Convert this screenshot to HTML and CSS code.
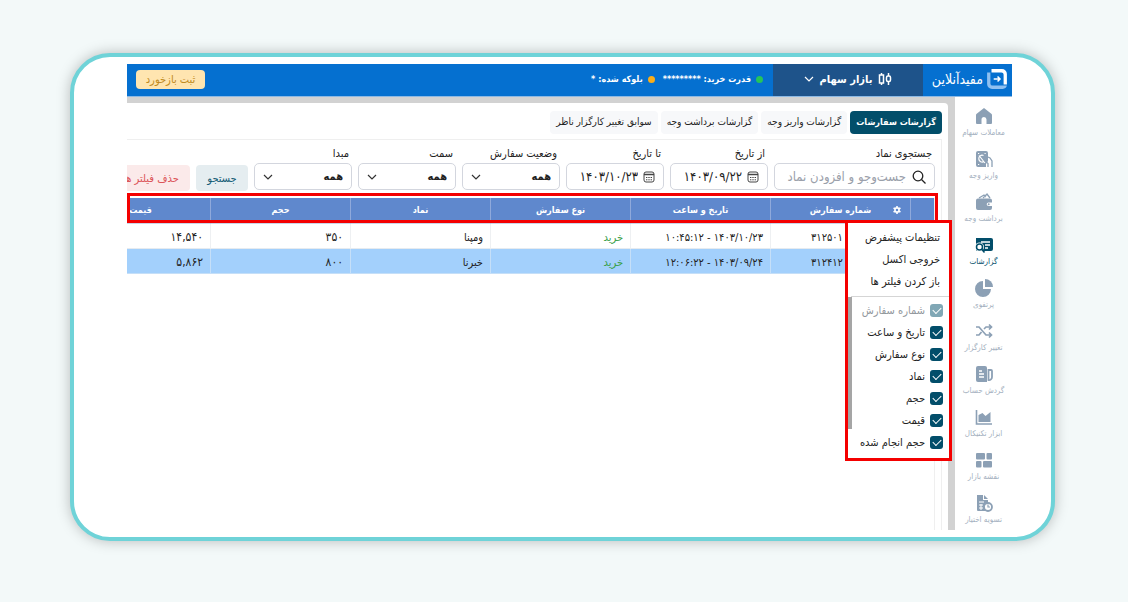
FILE: index.html
```html
<!DOCTYPE html>
<html lang="fa" dir="rtl">
<head>
<meta charset="utf-8">
<meta name="viewport" content="width=device-width, initial-scale=1">
<title>گزارشات سفارشات</title>
<link rel="stylesheet" href="styles.css">
</head>
<body>
<div class="frame">
<div class="app">
  <header class="topbar">
    <a class="brand" href="#">
      <svg class="brand-mark" viewBox="0 0 20 20" width="22" height="22"><path d="M5 1h9.500a4.500 4.500 0 0 1 4.500 4.500V15h-3V6a2 2 0 0 0-2-2H5z" fill="#fff"/><path d="M1.500 4H4v10a2 2 0 0 0 2 2h13a4 4 0 0 1-4 3H5.500a4.500 4.500 0 0 1-4.500-4.500V4z" fill="#8fc0f0"/><path d="M7 10h5.500M10.500 7.800 12.700 10l-2.200 2.200" fill="none" stroke="#fff" stroke-width="1.400"/></svg>
      <span>مفیدآنلاین</span>
    </a>
    <button class="market" type="button">
      <svg viewBox="0 0 14 14" width="14" height="14" fill="none" stroke="#fff" stroke-width="1.500"><rect x="1.500" y="3" width="4" height="8"/><path d="M3.500 1v2M3.500 11v2M10.500 1v3M10.500 10v3"/><rect x="8.500" y="4" width="4" height="5.500" rx="1.500"/></svg>
      <span>بازار سهام</span>
      <svg viewBox="0 0 10 10" width="10" height="10" fill="none" stroke="#fff" stroke-width="1.200"><path d="m1 3 4 4 4-4"/></svg>
    </button>
    <div class="balances">
      <span class="balance"><i class="dot green"></i>قدرت خرید: *********</span>
      <span class="balance"><i class="dot orange"></i>بلوکه شده: *</span>
    </div>
    <button class="feedback" type="button">ثبت بازخورد</button>
  </header>

  <div class="body">
    <nav class="side">
      <a href="#"><svg viewBox="0 0 18 18"><path d="M9 1 2 6.500a2 2 0 0 0-1 2V16a1 1 0 0 0 1 1h4.500v-4.500a2.500 2.500 0 0 1 5 0V17H16a1 1 0 0 0 1-1V8.500a2 2 0 0 0-1-2z" fill="currentColor"/></svg>معاملات سهام</a>
      <a href="#"><svg viewBox="0 0 18 18"><path d="M3 1h8a2 2 0 0 1 2 2v8l-2 3v3H3a2 2 0 0 1-2-2V3a2 2 0 0 1 2-2z" fill="currentColor"/><path d="M4 5.500 10 13M8.500 5.500a3.400 3.400 0 1 0 .5 6M3 3.500h1.200M9.500 3.500h1.200M3 14.500h1.200" stroke="#fff" stroke-width="1.200" fill="none"/><path d="M13 7l2 1 2 3v6M9 10l4 3.500V17" stroke="currentColor" stroke-width="1.300" fill="none"/></svg>واریز وجه</a>
      <a href="#"><svg viewBox="0 0 18 18"><path d="M1 7.500a2 2 0 0 1 2-2h12a2 2 0 0 1 2 2v2h-3.500a1.800 1.800 0 0 0 0 3.600H17V15a2 2 0 0 1-2 2H3a2 2 0 0 1-2-2z" fill="currentColor"/><path d="m4 5 5-3 2 2M8 5l4-4 3 4" fill="none" stroke="currentColor" stroke-width="1.300"/><circle cx="13.700" cy="11.300" r="1" fill="currentColor"/></svg>برداشت وجه</a>
      <a class="active" href="#"><svg viewBox="0 0 18 18"><path d="M1 2h15a2 2 0 0 1 2 2v9a2 2 0 0 1-2 2H1z" fill="currentColor"/><path d="M6 6h9M10 9h5M10 12h3" stroke="#fff" stroke-width="1.300"/><circle cx="4.500" cy="11" r="4.500" fill="#fff"/><circle cx="4.500" cy="11" r="3" fill="#fff" stroke="currentColor" stroke-width="1.500"/><path d="m6.500 13 3 3.500" stroke="currentColor" stroke-width="1.600"/></svg>گزارشات</a>
      <a href="#"><svg viewBox="0 0 18 18" fill="currentColor"><path d="M8 2v8h8a8 8 0 1 1-8-8z"/><path d="M10 0a8 8 0 0 1 8 8h-8z"/></svg>پرتفوی</a>
      <a href="#"><svg viewBox="0 0 18 18" fill="none" stroke="currentColor" stroke-width="1.700"><path d="M1 5h3l7 8h5M1 13h3l2.500-3M9 7l2-2h5M14 2.500 16.500 5 14 7.500M14 10.500l2.500 2.500-2.500 2.500"/></svg>تغییر کارگزار</a>
      <a href="#"><svg viewBox="0 0 18 18"><path d="M3 1h7a2 2 0 0 1 2 2v14H3a2 2 0 0 1-2-2V3a2 2 0 0 1 2-2z" fill="currentColor"/><path d="M4 6h3M4 9h5M4 12h5" stroke="#fff" stroke-width="1.400"/><path d="M13.500 5H16a1 1 0 0 1 1 1v6a3 3 0 0 1-3.500 3z" fill="none" stroke="currentColor" stroke-width="1.800"/></svg>گردش حساب</a>
      <a href="#"><svg viewBox="0 0 18 18"><path d="M1.500 2v14H17" fill="none" stroke="currentColor" stroke-width="1.600"/><path d="M3.500 14V7l4-2 3 3 5-4v10z" fill="currentColor"/></svg>ابزار تکنیکال</a>
      <a href="#"><svg viewBox="0 0 18 18" fill="currentColor"><rect x="1" y="2" width="9" height="6.500" rx="1"/><rect x="11.500" y="2" width="5.500" height="6.500" rx="1"/><rect x="1" y="10" width="5.500" height="6.500" rx="1"/><rect x="8" y="10" width="9" height="6.500" rx="1"/></svg>نقشه بازار</a>
      <a href="#"><svg viewBox="0 0 18 18"><path d="M2 1h6v5h5v11H3a1 1 0 0 1-1-1z" fill="currentColor"/><path d="m9 1 4 4H9z" fill="currentColor"/><path d="M4 8h5M4 11h4M4 14h4M6 10v6" stroke="#fff"/><circle cx="13" cy="13" r="4" fill="#fff" stroke="currentColor" stroke-width="1.800"/><path d="M13 10.500V13h2" stroke="currentColor" stroke-width="1.200" fill="none"/></svg>تسویه اختیار</a>
    </nav>

    <main class="workspace">
      <div class="panel">
        <div class="tabs">
          <button class="tab current" type="button">گزارشات سفارشات</button>
          <button class="tab" type="button">گزارشات واریز وجه</button>
          <button class="tab" type="button">گزارشات برداشت وجه</button>
          <button class="tab" type="button">سوابق تغییر کارگزار ناظر</button>
        </div>
        <section class="report">
          <form class="filters">
            <div class="field search">
              <label for="symbol">جستجوی نماد</label>
              <div class="control"><svg viewBox="0 0 14 14" width="14" height="14" fill="none" stroke="#222" stroke-width="1.300"><circle cx="6" cy="6" r="4.800"/><path d="m9.500 9.500 4 4"/></svg><input id="symbol" type="text" placeholder="جست‌وجو و افزودن نماد"></div>
            </div>
            <div class="field">
              <label for="from">از تاریخ</label>
              <div class="control date"><svg viewBox="0 0 12 12" width="12" height="12" fill="none" stroke="#444"><rect x="1" y="1" width="10" height="10" rx="2"/><path d="M1 3.500h10" stroke-width="1.500"/><path d="M3 6.500h6M3 8.800h6" stroke-dasharray="1.400 .9"/></svg><input id="from" type="text" value="۱۴۰۳/۰۹/۲۲"></div>
            </div>
            <div class="field">
              <label for="to">تا تاریخ</label>
              <div class="control date"><svg viewBox="0 0 12 12" width="12" height="12" fill="none" stroke="#444"><rect x="1" y="1" width="10" height="10" rx="2"/><path d="M1 3.500h10" stroke-width="1.500"/><path d="M3 6.500h6M3 8.800h6" stroke-dasharray="1.400 .9"/></svg><input id="to" type="text" value="۱۴۰۳/۱۰/۲۳"></div>
            </div>
            <div class="field">
              <label for="status">وضعیت سفارش</label>
              <div class="control"><select id="status"><option>همه</option></select><svg viewBox="0 0 10 10" width="10" height="10" fill="none" stroke="#333" stroke-width="1.200"><path d="m1 3 4 4 4-4"/></svg></div>
            </div>
            <div class="field">
              <label for="direction">سمت</label>
              <div class="control"><select id="direction"><option>همه</option></select><svg viewBox="0 0 10 10" width="10" height="10" fill="none" stroke="#333" stroke-width="1.200"><path d="m1 3 4 4 4-4"/></svg></div>
            </div>
            <div class="field">
              <label for="origin">مبدا</label>
              <div class="control"><select id="origin"><option>همه</option></select><svg viewBox="0 0 10 10" width="10" height="10" fill="none" stroke="#333" stroke-width="1.200"><path d="m1 3 4 4 4-4"/></svg></div>
            </div>
            <button class="action find" type="button">جستجو</button>
            <button class="action clear" type="button">حذف فیلتر ها</button>
          </form>

          <div class="grid">
            <table>
              <colgroup><col class="narrow"><col><col><col><col><col><col></colgroup>
              <thead>
                <tr>
                  <th></th>
                  <th><button class="gear" type="button" aria-label="تنظیمات"><svg viewBox="0 0 10 10" width="8" height="8"><circle cx="5" cy="5" r="2.600" fill="none" stroke="#fff" stroke-width="2"/><path d="M5 0v2M5 8v2M.7 2.500l1.700 1M7.600 6.500l1.700 1M.7 7.500l1.700-1M7.600 3.500l1.700-1" stroke="#fff" stroke-width="2"/></svg></button>شماره سفارش</th>
                  <th>تاریخ و ساعت</th><th>نوع سفارش</th><th>نماد</th><th>حجم</th><th>قیمت</th>
                </tr>
              </thead>
              <tbody>
                <tr><td></td><td class="order" dir="ltr">۳۱۲۵۰۱</td><td><bdi dir="ltr">۱۰:۴۵:۱۲ - ۱۴۰۳/۱۰/۲۳</bdi></td><td class="buy">خرید</td><td>ومپنا</td><td class="num">۳۵۰</td><td class="num">۱۴,۵۴۰</td></tr>
                <tr class="selected"><td></td><td class="order" dir="ltr">۳۱۲۴۱۲</td><td><bdi dir="ltr">۱۲:۰۶:۲۲ - ۱۴۰۳/۰۹/۲۴</bdi></td><td class="buy">خرید</td><td>خبرنا</td><td class="num">۸۰۰</td><td class="num">۵,۸۶۲</td></tr>
              </tbody>
            </table>
            <div class="head-outline"></div>
            <div class="menu">
              <div class="commands">
                <button type="button">تنظیمات پیشفرض</button>
                <button type="button">خروجی اکسل</button>
                <button type="button">باز کردن فیلتر ها</button>
              </div>
              <div class="columns">
                <label class="off"><input type="checkbox" checked disabled>شماره سفارش</label>
                <label><input type="checkbox" checked>تاریخ و ساعت</label>
                <label><input type="checkbox" checked>نوع سفارش</label>
                <label><input type="checkbox" checked>نماد</label>
                <label><input type="checkbox" checked>حجم</label>
                <label><input type="checkbox" checked>قیمت</label>
                <label><input type="checkbox" checked>حجم انجام شده</label>
                <span class="thumb"></span>
              </div>
            </div>
          </div>
        </section>
      </div>
    </main>
  </div>
</div>
</div>
</body>
</html>
```
FILE: styles.css
```css
* { box-sizing: border-box; }
body {
  margin: 0;
  min-height: 100vh;
  display: flex;
  padding: 53px 73px 61px 70px;
  background: #f3f9f9;
  font-family: "DejaVu Sans Condensed", "DejaVu Sans", sans-serif;
  font-size: 11px;
  color: #222;
}
button, input, select { font: inherit; color: inherit; border: 0; margin: 0; padding: 0; background: none; }
button { cursor: pointer; white-space: nowrap; }
a { text-decoration: none; }
svg { flex: none; }
.frame {
  flex: 1;
  min-width: 0;
  display: flex;
  padding: 7px 39px 7px 53px;
  border: 4px solid #6fd3d8;
  border-radius: 40px;
  background: #fff;
  box-shadow: 0 0 14px rgba(0, 0, 0, .25);
}
.app { flex: 1; min-width: 0; display: flex; flex-direction: column; overflow: hidden; }

.topbar {
  display: flex;
  height: 33px;
  flex: none;
  align-items: stretch;
  background: #0570d0;
  border-bottom: 1px solid #8db9e4;
  color: #fff;
}
.brand { width: 89px; display: flex; align-items: center; gap: 3px; padding-right: 4px; padding-bottom: 2px; color: #fff; font-size: 14px; white-space: nowrap; }
.market { width: 150px; display: flex; align-items: center; justify-content: center; gap: 6px; padding-bottom: 2px; background: #1e538a; font-size: 11px; font-weight: bold; }
.balances { display: flex; align-items: center; gap: 8px; padding-right: 10px; padding-bottom: 2px; font-size: 9px; font-weight: bold; }
.balance { display: flex; align-items: center; gap: 5px; white-space: nowrap; }
.dot { width: 7px; height: 7px; border-radius: 50%; }
.green { background: #25c45a; }
.orange { background: #fbad18; }
.feedback { margin: 6px auto 0 9px; width: 69px; height: 19px; border-radius: 4px; background: #ffe5b0; color: #c08a20; }

.body { flex: 1; min-height: 0; display: flex; }
.side { width: 57px; flex: none; display: flex; flex-direction: column; gap: 11px; overflow: hidden; padding-top: 10px; }
.side a { flex: none; display: flex; flex-direction: column; align-items: center; gap: 2px; color: #a3afbe; font-size: 8px; line-height: 12px; white-space: nowrap; }
.side svg { width: 18px; height: 18px; color: #8ca0b5; }
.side .active, .side .active svg { color: #024e6a; }

.workspace { flex: 1; min-width: 0; display: flex; padding: 6px 7px 0 0; background: #d2d2d2; }
.panel { flex: 1; min-width: 0; display: flex; flex-direction: column; padding: 8px 6px 0 0; border-radius: 0 4px 0 0; background: #fff; }
.tabs { display: flex; gap: 3px; padding-bottom: 5px; }
.tab { height: 23px; padding: 0 6px 2px; border-radius: 4px; background: #f7f8fa; font-size: 10px; }
.tab.current { background: #024e6a; color: #fff; font-size: 9px; font-weight: bold; }
.report { flex: 1; min-width: 0; display: flex; flex-direction: column; padding: 7px 6px 0 0; border-top: 1px solid #efefef; border-right: 1px solid #efefef; }

.filters { display: flex; align-items: flex-end; gap: 6px; }
.field { width: 98px; flex: none; }
.field.search { width: 161px; }
.field label { display: block; height: 16px; line-height: 14px; padding-right: 3px; white-space: nowrap; }
.control { display: flex; align-items: center; gap: 6px; height: 27px; padding: 0 8px; border: 1px solid #d3d6de; border-radius: 5px; }
.control input { flex: 1; min-width: 0; width: 0; outline: 0; font-size: 13px; }
.control input::placeholder { color: #9aa0aa; opacity: 1; }
.control.date { gap: 5px; }
.control select { flex: 1; min-width: 0; appearance: none; outline: 0; font-weight: bold; }
.action { flex: none; height: 26px; margin-bottom: -1px; border-radius: 4px; }
.find { width: 52px; background: #e5edf0; color: #145c76; }
.clear { width: 78px; background: #fbeaea; color: #dc5458; }

.grid { flex: 1; position: relative; margin-top: 8px; border-right: 1px solid #efefef; }
table { width: 864px; table-layout: fixed; border-collapse: separate; border-spacing: 0; }
.narrow { width: 24px; }
th { height: 26px; padding: 0; background: #5f88cd; color: #fff; border-left: 1px solid #8fa9db; border-bottom: 2px solid #cad5e8; font-size: 9px; position: relative; }
td { height: 25px; padding: 2px 7px 0; border-left: 1px solid #eef0f2; border-bottom: 1px solid #e6ebf0; white-space: nowrap; text-align: right; }
.selected td { background: #a3d0fc; border-color: #c5dff8; }
.order { text-align: left; padding-left: 41px; }
.buy { color: #3ba04b; }
.num { font-size: 12px; }
.gear { position: absolute; right: 9px; top: 8px; height: 8px; display: flex; }
.head-outline { position: absolute; top: -5px; right: -4px; left: 0; height: 30px; border: 3px solid #f40000; }
.menu { position: absolute; top: 22px; right: -18px; width: 107px; border: 3px solid #f40000; background: #fff; }
.commands { display: flex; flex-direction: column; align-items: flex-start; padding: 3px 9px 4px 0; margin-left: 3px; border-bottom: 1px solid #d5d5d5; }
.commands button { height: 22px; }
.columns { position: relative; padding: 2px 6px 5px 0; }
.columns label { height: 22px; display: flex; align-items: center; gap: 5px; white-space: nowrap; }
.columns input { appearance: none; width: 13px; height: 13px; border-radius: 3px; background: #024e6a; display: grid; place-items: center; }
.columns input::before { content: ""; width: 7px; height: 4px; border: solid #fff; border-width: 0 0 1px 1px; transform: rotate(-45deg); margin-bottom: 2px; }
.off { color: #92979c; }
.columns .off input { background: #80a7b5; }
.thumb { position: absolute; left: 0; top: 0; width: 4px; height: 132px; background: #a5a5a5; }
```
